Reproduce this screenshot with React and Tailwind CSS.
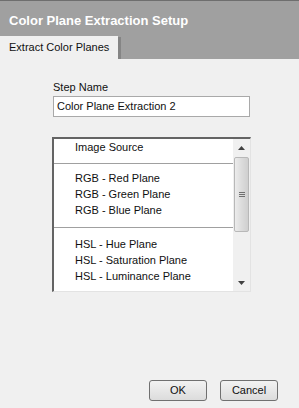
export default function App() {
  const font = { fontFamily: '"Liberation Sans", Arial, sans-serif' };
  return (
    <div className="w-[299px] h-[408px] bg-[#f0f0f0] flex flex-col overflow-hidden" style={font}>
      <div className="h-[59px] bg-[#a0a0a0] border-t border-[#6e6e6e] flex flex-col">
        <div className="pl-[9px] pt-[12px] h-[35px] text-white font-bold text-[13px] leading-[16px]">
          Color Plane Extraction Setup
        </div>
        <div className="flex flex-1 items-stretch">
          <div className="w-[118px] bg-[#f0f0f0] pl-[9px] pt-[5px] text-[11px] text-[#101010] leading-[13px]">
            Extract Color Planes
          </div>
          <div className="w-[3px] bg-[#858585] mt-[1px]"></div>
        </div>
      </div>
      <div className="flex flex-col pl-[52px] pt-[22px]">
        <div className="pl-[1px] text-[11px] leading-[13px] text-[#101010]">Step Name</div>
        <div className="mt-[2px] ml-[1px] w-[197px] h-[21px] bg-white border border-[#a9a9a9] pl-[3px] text-[11px] leading-[19px] text-[#101010]">
          Color Plane Extraction 2
        </div>
        <div className="mt-[20px] w-[199px] h-[155px] bg-white border-t-2 border-l-2 border-[#646464] border-r border-b border-r-[#e3e3e3] border-b-[#e3e3e3] flex">
          <div className="flex-1 flex flex-col text-[11px] leading-[16px] text-[#101010]">
            <div className="pl-[21px] h-[24px]">Image Source</div>
            <div className="h-px bg-[#a0a0a0]"></div>
            <div className="pl-[21px] pt-[6px] flex flex-col">
              <div>RGB - Red Plane</div>
              <div>RGB - Green Plane</div>
              <div>RGB - Blue Plane</div>
            </div>
            <div className="mt-[9px] h-px bg-[#a0a0a0]"></div>
            <div className="pl-[21px] pt-[8px] flex flex-col">
              <div>HSL - Hue Plane</div>
              <div>HSL - Saturation Plane</div>
              <div>HSL - Luminance Plane</div>
            </div>
          </div>
          <div className="w-[17px] bg-[#f0f0f0] flex flex-col">
            <div className="h-[18px] flex items-center justify-center">
              <svg width="7" height="4" viewBox="0 0 7 4"><path d="M3.5 0 L7 4 L0 4 Z" fill="#404040" /></svg>
            </div>
            <div className="mx-[1px] h-[75px] rounded-[2px] border border-[#b8b8b8] bg-gradient-to-r from-[#ececec] via-[#dcdcdc] to-[#cfcfcf] flex items-center justify-center">
              <div className="flex flex-col gap-[1px]">
                <div className="w-[6px] h-px bg-[#707070]"></div>
                <div className="w-[6px] h-px bg-[#707070]"></div>
                <div className="w-[6px] h-px bg-[#707070]"></div>
              </div>
            </div>
            <div className="flex-1"></div>
            <div className="h-[17px] flex items-center justify-center">
              <svg width="7" height="4" viewBox="0 0 7 4"><path d="M0 0 L7 0 L3.5 4 Z" fill="#404040" /></svg>
            </div>
          </div>
        </div>
      </div>
      <div className="flex-1"></div>
      <div className="flex justify-end gap-[13px] pr-[21px] pb-[7px]">
        <button className="w-[58px] h-[21px] rounded-[3px] border border-[#707070] bg-gradient-to-b from-[#f2f2f2] to-[#dcdcdc] text-[11px] text-[#101010]">OK</button>
        <button className="w-[58px] h-[21px] rounded-[3px] border border-[#707070] bg-gradient-to-b from-[#f2f2f2] to-[#dcdcdc] text-[11px] text-[#101010]">Cancel</button>
      </div>
    </div>
  );
}
